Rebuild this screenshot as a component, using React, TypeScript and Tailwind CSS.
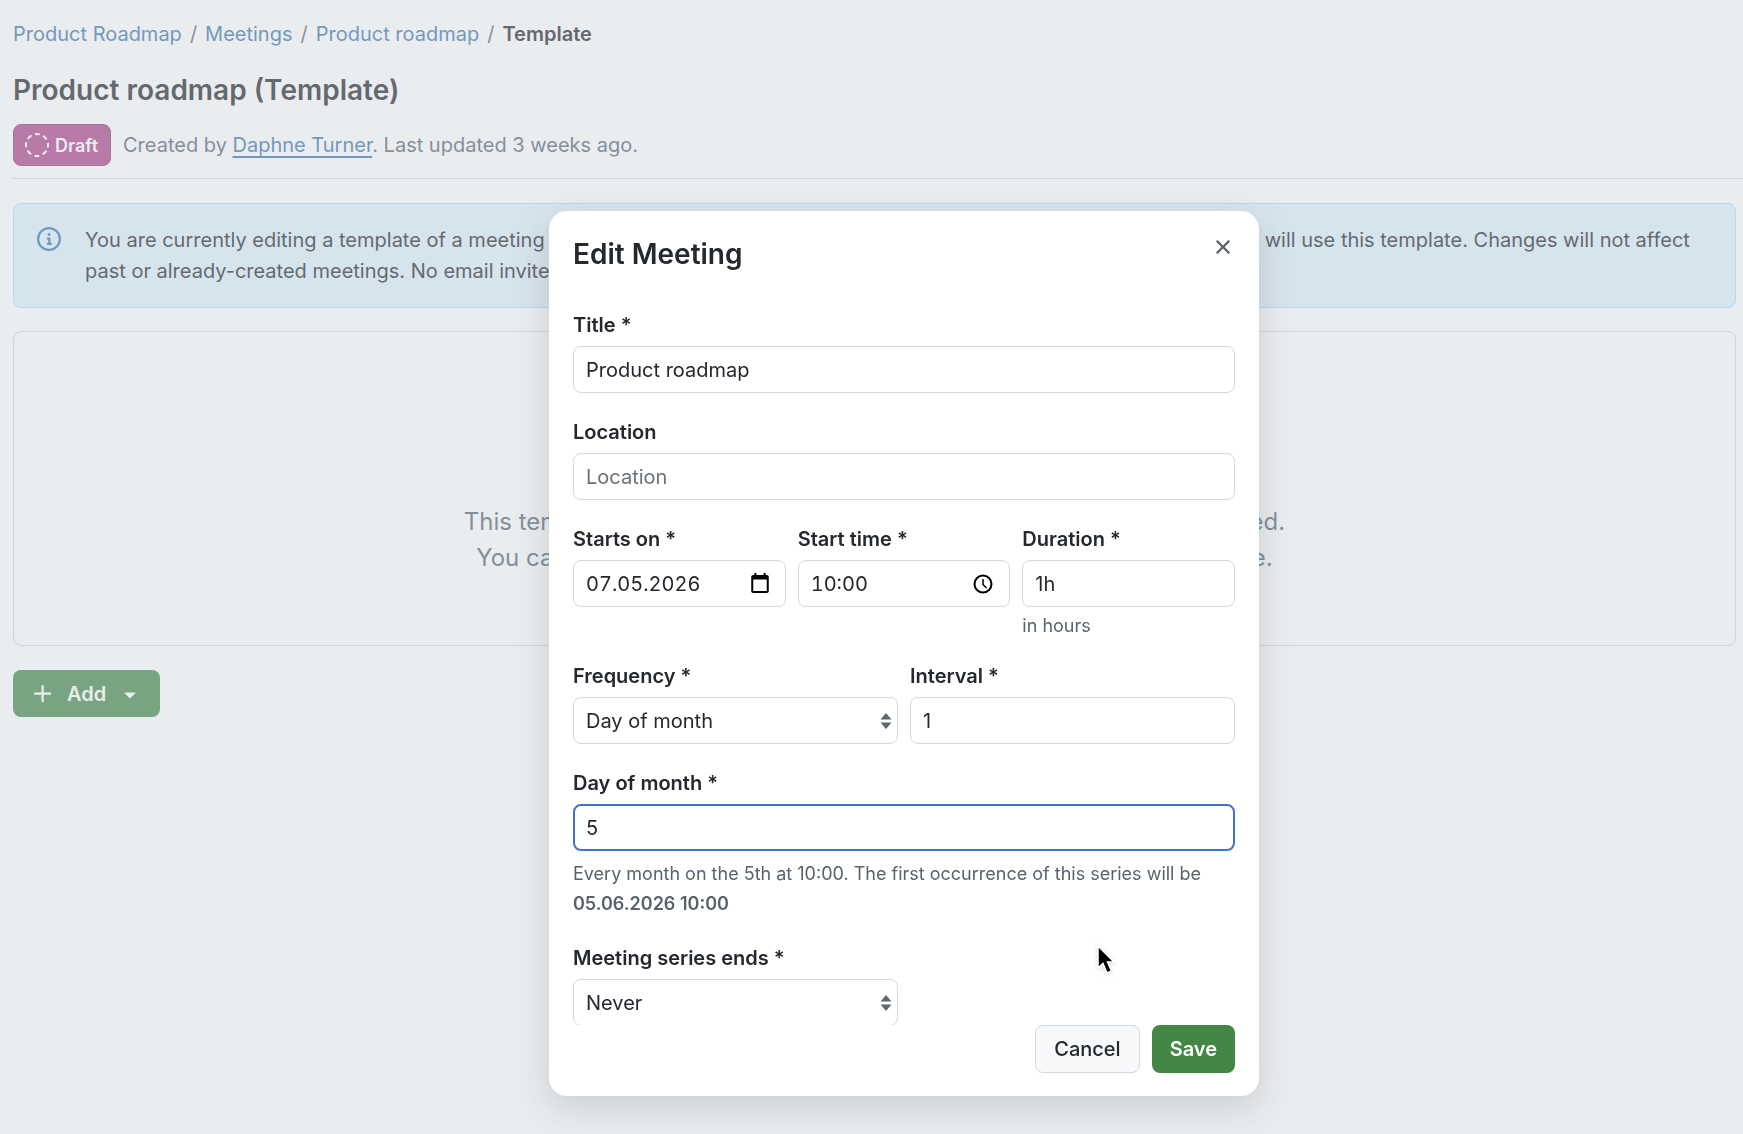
import React from 'react';

const ICONS = {
  info: 'M0 8a8 8 0 1 1 16 0A8 8 0 0 1 0 8Zm8-6.5a6.5 6.5 0 1 0 0 13 6.5 6.5 0 0 0 0-13ZM6.5 7.75A.75.75 0 0 1 7.25 7h1a.75.75 0 0 1 .75.75v2.75h.25a.75.75 0 0 1 0 1.5h-2a.75.75 0 0 1 0-1.5h.25v-2h-.25a.75.75 0 0 1-.75-.75ZM8 6a1 1 0 1 1 0-2 1 1 0 0 1 0 2Z',
  x: 'M3.72 3.72a.75.75 0 0 1 1.06 0L8 6.94l3.22-3.22a.749.749 0 0 1 1.275.326.749.749 0 0 1-.215.734L9.06 8l3.22 3.22a.749.749 0 0 1-.326 1.275.749.749 0 0 1-.734-.215L8 9.06l-3.22 3.22a.751.751 0 0 1-1.042-.018.751.751 0 0 1-.018-1.042L6.94 8 3.72 4.78a.75.75 0 0 1 0-1.06Z',
  plus: 'M7.75 2a.75.75 0 0 1 .75.75V7h4.25a.75.75 0 0 1 0 1.5H8.5v4.25a.75.75 0 0 1-1.5 0V8.5H2.75a.75.75 0 0 1 0-1.5H7V2.75A.75.75 0 0 1 7.75 2Z',
  caret: 'm4.427 7.427 3.396 3.396a.25.25 0 0 0 .354 0l3.396-3.396A.25.25 0 0 0 11.396 7H4.604a.25.25 0 0 0-.177.427Z',
  calendar: 'M3.5 0h1.6v1.6h5.8V0h1.6v1.6h.9c.9 0 1.6.7 1.6 1.6v11.2c0 .9-.7 1.6-1.6 1.6H2.6c-.9 0-1.6-.7-1.6-1.6V3.2c0-.9.7-1.6 1.6-1.6h.9V0Zm-.9 5.2v9.2h10.8V5.2H2.6Z',
};

const Icon: React.FC<{ name: keyof typeof ICONS; className?: string }> = ({ name, className }) => (
  <svg viewBox="0 0 16 16" fill="currentColor" aria-hidden="true" className={className}>
    <path d={ICONS[name]} />
  </svg>
);

const inputClass =
  'block w-full h-[47px] rounded-lg border border-[#d1d9e0] bg-white px-3 text-[20px] text-[#25292e] placeholder:text-[#6a717a] outline-none';

interface FieldProps {
  id: string;
  label: string;
  className?: string;
  children: React.ReactNode;
}

const Field: React.FC<FieldProps> = ({ id, label, className, children }) => (
  <div className={className}>
    <label htmlFor={id} className="block mb-[7px] text-[20px] leading-7 font-semibold text-[#25292e]">
      {label}
    </label>
    {children}
  </div>
);

const SelectField: React.FC<{ id: string; options: string[] }> = ({ id, options }) => (
  <div className="relative">
    <select id={id} defaultValue={options[0]} className={`${inputClass} appearance-none`}>
      {options.map((option) => (
        <option key={option}>{option}</option>
      ))}
    </select>
    <svg
      viewBox="0 0 12 18"
      aria-hidden="true"
      className="absolute right-1.5 top-1/2 h-[18px] w-3 -translate-y-1/2 fill-[#5f6770] pointer-events-none"
    >
      <path d="M6 1 11.5 7.5H.5ZM6 17 .5 10.500H11.5Z" />
    </svg>
  </div>
);

const Page = () => (
  <main className="pl-[13px] text-[20px] text-[#1f2328]">
    <nav aria-label="Breadcrumb" className="pt-[19px] leading-[31px]">
      <ol className="flex gap-2">
        {['Product Roadmap', 'Meetings', 'Product roadmap'].map((item) => (
          <li key={item} className="flex gap-2">
            <a href="#" className="text-[#3c72a9]">{item}</a>
            <span className="text-[#59636e]">/</span>
          </li>
        ))}
        <li className="font-semibold" aria-current="page">Template</li>
      </ol>
    </nav>

    <header className="border-b border-[#d1d9e0] pb-3">
      <h1 className="pt-[19px] text-[28px] leading-[42px] font-semibold">Product roadmap (Template)</h1>
      <div className="mt-[13px] flex items-center gap-3 text-[#59636e]">
        <button className="flex h-[42px] items-center gap-1.5 rounded-lg border border-[#8f3a70] bg-[#ad4085] pl-[11px] pr-3 text-[18px] font-semibold text-white">
          <svg viewBox="0 0 24 24" className="h-6 w-6" fill="none" stroke="currentColor" strokeWidth="2" aria-hidden="true">
            <circle cx="12" cy="12" r="11" strokeDasharray="5.1 3.54" strokeDashoffset="2.55" />
          </svg>
          Draft
        </button>
        <p>
          Created by <a href="#" className="text-[#3c72a9] underline underline-offset-4">Daphne Turner</a>. Last updated 3 weeks ago.
        </p>
      </div>
    </header>

    <div className="mr-[7px]">
      <section className="mt-6 flex gap-6 rounded-lg border border-[#b0dbff] bg-[#e0f0fa] px-[23px] pt-[21px] pb-5 leading-[31px]">
        <Icon name="info" className="mt-[2px] h-6 w-6 shrink-0 text-[#3c72a9]" />
        <p>
          You are currently editing a template of a meeting series. Every new occurrence of a meeting that is part of the current series will use this template. Changes will not affect past or already-created meetings. No email invites will be sent out.
        </p>
      </section>

      <section className="mt-[23px] flex h-[315px] flex-col items-center rounded-lg border border-[#d1d9e0] pt-[172px] text-center text-2xl leading-9 text-[#59636e]">
        <p>This template is currently empty. Nothing has been added and prepared.</p>
        <p>You can add more sections and agenda items here to build a template.</p>
      </section>

      <button className="mt-6 flex h-[47px] items-center rounded-lg bg-[#448646] px-[18px] font-semibold text-white">
        <Icon name="plus" className="mr-3 h-6 w-6" />
        Add
        <Icon name="caret" className="ml-3 h-6 w-6" />
      </button>
    </div>
  </main>
);

const EditMeetingDialog = () => (
  <div
    role="dialog"
    aria-labelledby="dialog-title"
    className="flex max-h-full w-[710px] flex-col rounded-[18px] bg-white shadow-[0_12px_36px_rgba(37,41,46,0.16)]"
  >
    <div className="flex items-start justify-between pl-6 pr-3 pt-3">
      <h2 id="dialog-title" className="pt-[10px] text-[28px] leading-[42px] font-semibold text-[#25292e]">
        Edit Meeting
      </h2>
      <button aria-label="Close" className="flex h-12 w-12 items-center justify-center text-[#59636e]">
        <Icon name="x" className="h-6 w-6" />
      </button>
    </div>

    <form className="mt-9 min-h-0 overflow-hidden px-6">
      <div className="flex flex-col gap-[25px] pb-6">
        <Field id="title" label="Title *">
          <input id="title" className={inputClass} defaultValue="Product roadmap" />
        </Field>

        <Field id="location" label="Location">
          <input id="location" className={inputClass} placeholder="Location" />
        </Field>

        <div className="grid grid-cols-3 gap-3">
          <Field id="date" label="Starts on *">
            <div className="relative">
              <input id="date" className={`${inputClass} tabular-nums`} defaultValue="07.05.2026" />
              <Icon name="calendar" className="absolute right-4 top-[13px] h-5 w-5 text-black" />
            </div>
          </Field>
          <Field id="time" label="Start time *">
            <div className="relative">
              <input id="time" className={`${inputClass} tabular-nums`} defaultValue="10:00" />
              <svg viewBox="0 0 20 20" fill="none" stroke="#000" strokeWidth="2" aria-hidden="true" className="absolute right-[17px] top-[14px] h-5 w-5">
                <circle cx="10" cy="10" r="8.5" />
                <path d="M10 5v5.5l3.5 3.5" strokeWidth="1.5" />
              </svg>
            </div>
          </Field>
          <Field id="duration" label="Duration *">
            <input id="duration" className={inputClass} defaultValue="1h" />
            <p className="mt-2 text-[18px] leading-[22px] text-[#59636e]">in hours</p>
          </Field>
        </div>

        <div className="grid grid-cols-2 gap-3">
          <Field id="frequency" label="Frequency *">
            <SelectField id="frequency" options={['Day of month', 'Weekly', 'Daily']} />
          </Field>
          <Field id="interval" label="Interval *">
            <input id="interval" className={inputClass} defaultValue="1" />
          </Field>
        </div>

        <Field id="day" label="Day of month *">
          <input
            id="day"
            className="block w-full h-[47px] rounded-lg border-2 border-[#3f74c4] bg-white px-[11px] text-[20px] text-[#25292e] outline-none"
            defaultValue="5"
          />
          <p className="mt-2 text-[18px] leading-[30px] text-[#59636e]">
            Every month on the 5th at 10:00. The first occurrence of this series will be{' '}
            <strong className="block font-semibold">05.06.2026 10:00</strong>
          </p>
        </Field>

        <div className="grid grid-cols-2 gap-3">
          <Field id="ends" label="Meeting series ends *">
            <SelectField id="ends" options={['Never', 'On date', 'After occurrences']} />
          </Field>
        </div>
      </div>
    </form>

    <div className="flex shrink-0 justify-end gap-3 px-6 pb-[23px] text-[20px]">
      <button className="h-12 rounded-lg border border-[#d1d9e0] bg-[#f6f8fa] px-[18px] font-medium text-[#25292e]">Cancel</button>
      <button className="h-12 rounded-lg bg-[#448646] px-[18px] font-semibold text-white">Save</button>
    </div>
  </div>
);

export default function App() {
  return (
    <div className="min-h-screen bg-white font-['Inter',sans-serif]">
      <Page />
      <div className="fixed inset-0 flex items-start justify-center bg-[#c8d1da]/40 pt-[211px] pb-[38px] pl-[65px]">
        <EditMeetingDialog />
      </div>
      <svg viewBox="0 0 20 32" aria-hidden="true" className="pointer-events-none fixed left-[1096px] top-[944px] h-8 w-5 drop-shadow">
        <path d="M2 2v22l5-4.5 4 9.5 4.5-2-4-9h6.500Z" fill="#000" stroke="#fff" strokeWidth="1.5" />
      </svg>
    </div>
  );
}
